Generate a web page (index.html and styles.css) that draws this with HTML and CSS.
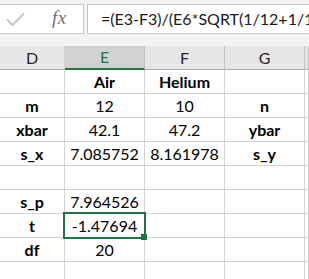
FILE: index.html
```html
<!DOCTYPE html>
<html>
<head>
<meta charset="utf-8">
<link rel="stylesheet" href="styles.css">
</head>
<body>
<div class="fbar">
  <div class="tools">
    <svg class="check" width="20" height="16" viewBox="0 0 20 16"><path d="M1 7.5 L6.5 13 L18 1.5" fill="none" stroke="#c6c6c6" stroke-width="2"/></svg>
    <span class="fx">fx</span>
  </div>
  <div class="formula">=(E3-F3)/(E6*SQRT(1/12+1/10))</div>
</div>
<div class="sheet">
  <div class="hd">D</div><div class="hd hsel">E</div><div class="hd">F</div><div class="hd">G</div><div class="hd"></div>

  <div class="c"></div><div class="c b">Air</div><div class="c b">Helium</div><div class="c"></div><div class="c"></div>
  <div class="c b">m</div><div class="c">12</div><div class="c">10</div><div class="c b">n</div><div class="c"></div>
  <div class="c b">xbar</div><div class="c">42.1</div><div class="c">47.2</div><div class="c b">ybar</div><div class="c"></div>
  <div class="c b">s_x</div><div class="c">7.085752</div><div class="c">8.161978</div><div class="c b">s_y</div><div class="c"></div>
  <div class="c"></div><div class="c"></div><div class="c"></div><div class="c"></div><div class="c"></div>
  <div class="c b">s_p</div><div class="c">7.964526</div><div class="c"></div><div class="c"></div><div class="c"></div>
  <div class="c b">t</div><div class="c sel">-1.47694<span class="handle"></span></div><div class="c"></div><div class="c"></div><div class="c"></div>
  <div class="c b">df</div><div class="c">20</div><div class="c"></div><div class="c"></div><div class="c"></div>
  <div class="c"></div><div class="c"></div><div class="c"></div><div class="c"></div><div class="c"></div>
</div>
</body>
</html>
```
FILE: styles.css
```css
html, body {
  margin: 0;
  padding: 0;
  background: #ffffff;
}
body {
  width: 309px;
  height: 279px;
  overflow: hidden;
  font-family: Lato, "Open Sans", sans-serif;
  color: #000;
}
.fbar {
  height: 46px;
  box-sizing: border-box;
  padding-top: 4px;
  background: #f3f3f3;
  display: flex;
  align-items: flex-start;
  gap: 3px;
}
.tools {
  width: 84px;
  height: 30px;
  box-sizing: border-box;
  background: #fff;
  border: 1px solid #c6c6c6;
  border-left: none;
  position: relative;
  display: flex;
  align-items: center;
}
.check {
  margin-left: 6px;
  margin-top: 2px;
}
.fx {
  font-family: "Liberation Serif", serif;
  font-style: italic;
  font-size: 19px;
  color: #707070;
  margin-left: 26px;
  margin-top: -2px;
  letter-spacing: 0.5px;
}
.formula {
  flex: 1;
  height: 30px;
  box-sizing: border-box;
  background: #fff;
  border: 1px solid #c6c6c6;
  border-right: none;
  padding-left: 13px;
  font-size: 16px;
  line-height: 28px;
  white-space: nowrap;
  overflow: hidden;
  color: #1a1a1a;
}
.sheet {
  display: grid;
  grid-template-columns: 65px 80px 80px 80px 1fr;
  grid-auto-rows: 24px;
}
.hd {
  box-sizing: border-box;
  background: #e6e6e6;
  border-right: 1px solid #c4c4c4;
  border-bottom: 1px solid #ababab;
  text-align: center;
  font-size: 16px;
  line-height: 23px;
  color: #262626;
}
.hd:first-child {
  border-right-color: #d2d2d2;
}
.hsel {
  background: #d2d2d2;
  color: #217346;
  border-bottom: 2px solid #217346;
  line-height: 22px;
}
.c {
  box-sizing: border-box;
  border-right: 1px solid #d4d4d4;
  border-bottom: 1px solid #d4d4d4;
  text-align: center;
  font-size: 16px;
  line-height: 23px;
  white-space: nowrap;
}
.b {
  font-weight: bold;
}
.sel {
  position: relative;
}
.sel::after {
  content: "";
  position: absolute;
  left: -2px;
  top: -2px;
  width: 83px;
  height: 27px;
  box-sizing: border-box;
  border: 2px solid #217346;
}
.handle {
  position: absolute;
  left: 76px;
  top: 20px;
  width: 6px;
  height: 6px;
  background: #217346;
  z-index: 2;
}
```
